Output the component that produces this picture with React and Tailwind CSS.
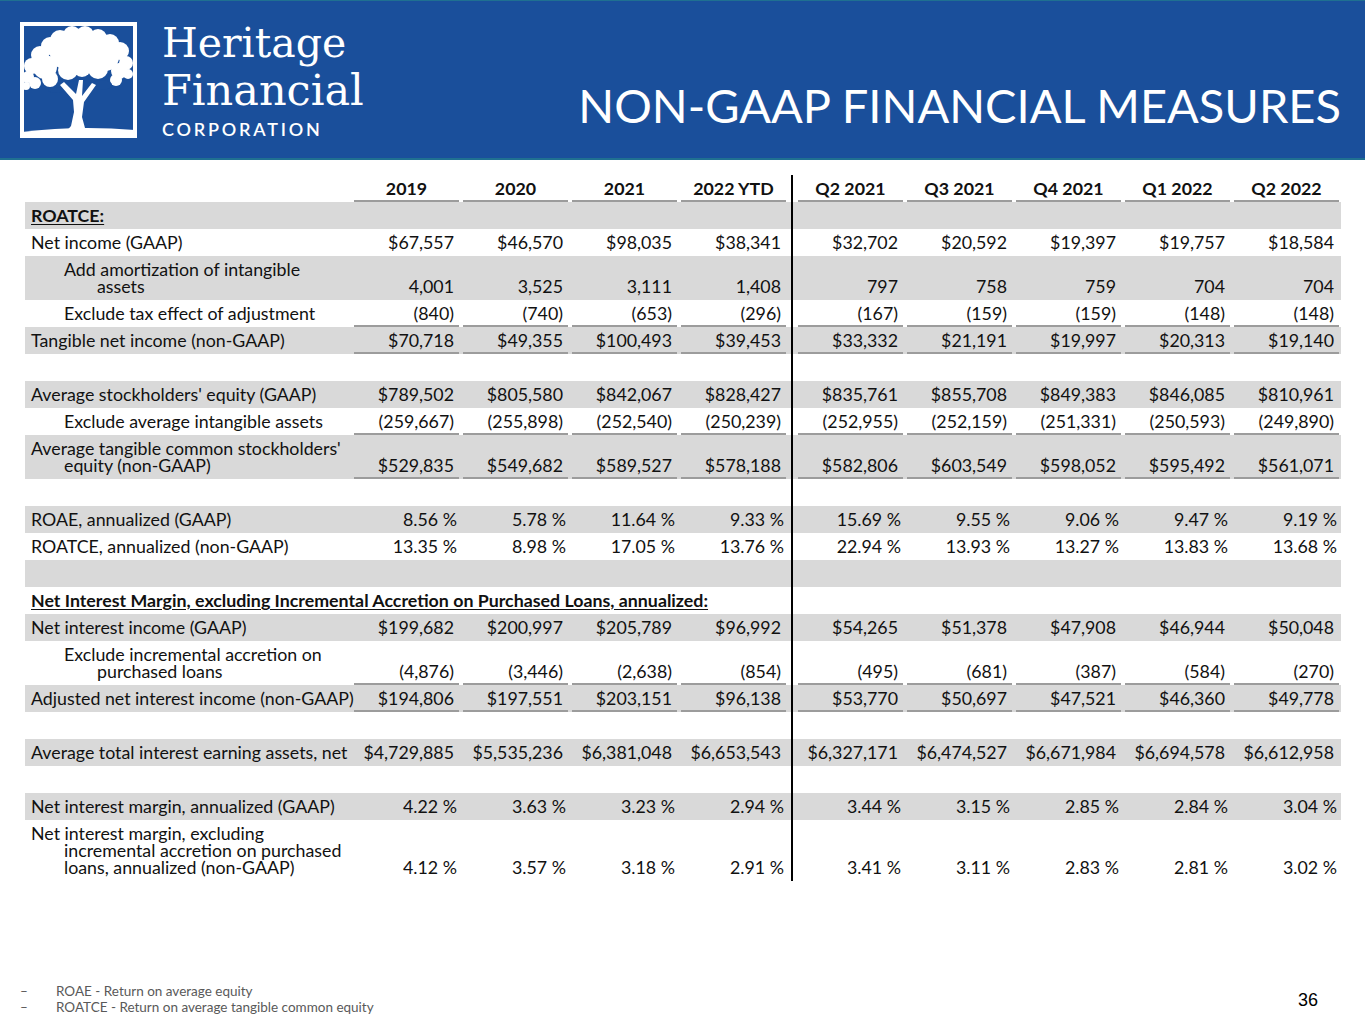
import React from 'react';

// rows of the non-GAAP table, in slide order
const G = 'bg-[#d9d9d9]';
const W = 'bg-white';

const rows = [
  { kind: 'section', label: 'ROATCE:', bg: G },
  { label: 'Net income (GAAP)', bg: W, vals: ['$67,557', '$46,570', '$98,035', '$38,341', '$32,702', '$20,592', '$19,397', '$19,757', '$18,584'] },
  { label: 'Add amortization of intangible\nassets', lines: 2, indent: true, bg: G, vals: ['4,001', '3,525', '3,111', '1,408', '797', '758', '759', '704', '704'] },
  { label: 'Exclude tax effect of adjustment', indent: true, bg: W, line: true, vals: ['(840)', '(740)', '(653)', '(296)', '(167)', '(159)', '(159)', '(148)', '(148)'] },
  { label: 'Tangible net income (non-GAAP)', bg: G, line: true, vals: ['$70,718', '$49,355', '$100,493', '$39,453', '$33,332', '$21,191', '$19,997', '$20,313', '$19,140'] },
  { kind: 'blank', bg: W },
  { label: "Average stockholders' equity (GAAP)", bg: G, vals: ['$789,502', '$805,580', '$842,067', '$828,427', '$835,761', '$855,708', '$849,383', '$846,085', '$810,961'] },
  { label: 'Exclude average intangible assets', indent: true, bg: W, line: true, vals: ['(259,667)', '(255,898)', '(252,540)', '(250,239)', '(252,955)', '(252,159)', '(251,331)', '(250,593)', '(249,890)'] },
  { label: "Average tangible common stockholders'\nequity (non-GAAP)", lines: 2, bg: G, line: true, vals: ['$529,835', '$549,682', '$589,527', '$578,188', '$582,806', '$603,549', '$598,052', '$595,492', '$561,071'] },
  { kind: 'blank', bg: W },
  { label: 'ROAE, annualized (GAAP)', bg: G, pct: true, vals: ['8.56 %', '5.78 %', '11.64 %', '9.33 %', '15.69 %', '9.55 %', '9.06 %', '9.47 %', '9.19 %'] },
  { label: 'ROATCE, annualized (non-GAAP)', bg: W, pct: true, vals: ['13.35 %', '8.98 %', '17.05 %', '13.76 %', '22.94 %', '13.93 %', '13.27 %', '13.83 %', '13.68 %'] },
  { kind: 'blank', bg: G },
  { kind: 'section', label: 'Net Interest Margin, excluding Incremental Accretion on Purchased Loans, annualized:', bg: W },
  { label: 'Net interest income (GAAP)', bg: G, vals: ['$199,682', '$200,997', '$205,789', '$96,992', '$54,265', '$51,378', '$47,908', '$46,944', '$50,048'] },
  { label: 'Exclude incremental accretion on\npurchased loans', lines: 2, indent: true, bg: W, line: true, vals: ['(4,876)', '(3,446)', '(2,638)', '(854)', '(495)', '(681)', '(387)', '(584)', '(270)'] },
  { label: 'Adjusted net interest income (non-GAAP)', bg: G, line: true, vals: ['$194,806', '$197,551', '$203,151', '$96,138', '$53,770', '$50,697', '$47,521', '$46,360', '$49,778'] },
  { kind: 'blank', bg: W },
  { label: 'Average total interest earning assets, net', bg: G, vals: ['$4,729,885', '$5,535,236', '$6,381,048', '$6,653,543', '$6,327,171', '$6,474,527', '$6,671,984', '$6,694,578', '$6,612,958'] },
  { kind: 'blank', bg: W },
  { label: 'Net interest margin, annualized (GAAP)', bg: G, pct: true, vals: ['4.22 %', '3.63 %', '3.23 %', '2.94 %', '3.44 %', '3.15 %', '2.85 %', '2.84 %', '3.04 %'] },
  { label: 'Net interest margin, excluding\nincremental accretion on purchased\nloans, annualized (non-GAAP)', lines: 3, bg: W, pct: true, vals: ['4.12 %', '3.57 %', '3.18 %', '2.91 %', '3.41 %', '3.11 %', '2.83 %', '2.81 %', '3.02 %'] },
];

const years = ['2019', '2020', '2021', '2022 YTD'];
const quarters = ['Q2 2021', 'Q3 2021', 'Q4 2021', 'Q1 2022', 'Q2 2022'];

const GRID = 'grid grid-cols-[327px_repeat(4,109px)_8px_repeat(5,109px)]';

function Divider() {
  return (
    <div className="flex justify-center">
      <div className="w-[2px] bg-black" />
    </div>
  );
}

function ValueCell({ v, line, pct }) {
  return (
    <div className={`mx-[2px] flex items-end justify-end whitespace-nowrap ${pct ? 'pr-[2px]' : 'pr-[5px]'} ${line ? 'border-b-2 border-[#9c9c9c] pb-[3px]' : 'pb-[5px]'}`}>
      {v}
    </div>
  );
}

function Row({ row }) {
  if (row.kind === 'blank') {
    return (
      <div className={`${GRID} h-[27px] ${row.bg}`}>
        <div className="col-span-5" />
        <Divider />
        <div className="col-span-5" />
      </div>
    );
  }
  if (row.kind === 'section') {
    return (
      <div className={`${GRID} h-[27px] ${row.bg}`}>
        <div className="col-span-5 flex items-end pb-[5px] pl-[6px] font-bold underline underline-offset-2 whitespace-nowrap">
          {row.label}
        </div>
        <Divider />
        <div className="col-span-5" />
      </div>
    );
  }
  const h = !row.lines ? 'h-[27px]' : row.lines === 2 ? 'h-[44px]' : 'h-[61px]';
  return (
    <div className={`${GRID} ${h} ${row.bg}`}>
      <div className="flex items-end pb-[5px] min-w-0">
        <div className={`whitespace-pre -indent-[33px] ${row.indent ? 'pl-[72px]' : 'pl-[39px]'}`}>{row.label}</div>
      </div>
      {row.vals.slice(0, 4).map((v, i) => (
        <ValueCell key={i} v={v} line={row.line} pct={row.pct} />
      ))}
      <Divider />
      {row.vals.slice(4).map((v, i) => (
        <ValueCell key={i} v={v} line={row.line} pct={row.pct} />
      ))}
    </div>
  );
}

function TreeLogo() {
  const leaves = [
    [40, 18, 10], [52, 13, 9], [65, 13, 9], [78, 16, 9], [90, 21, 9], [100, 29, 9], [106, 41, 7],
    [30, 24, 9], [20, 33, 9], [12, 44, 8], [8, 55, 6], [25, 45, 12], [45, 32, 15], [65, 30, 15],
    [85, 35, 14], [99, 49, 8], [78, 47, 10], [48, 48, 10], [30, 57, 8], [15, 61, 6], [96, 58, 6],
    [62, 46, 9], [108, 52, 5], [6, 64, 4],
  ];
  return (
    <svg width="117" height="116" viewBox="0 0 117 116">
      <rect x="2" y="2" width="113" height="112" fill="none" stroke="white" strokeWidth="4" />
      {leaves.map(([cx, cy, r], i) => (
        <circle key={i} cx={cx} cy={cy} r={r} fill="white" />
      ))}
      <ellipse cx="55" cy="64" rx="9" ry="5" fill="#1a4f9b" />
      <ellipse cx="82" cy="63" rx="10" ry="5" fill="#1a4f9b" />
      <ellipse cx="36" cy="68" rx="8" ry="3" fill="#1a4f9b" />
      <path
        d="M44 112 L51 104 L54 90 L53 78 L40 63 L44 60 L56 72 L59 58 L63 58 L62 74 L72 61 L76 63 L64 80 L62 95 L65 106 L74 112 Z"
        fill="white"
      />
      <path d="M2 114 L2 110 Q58 103 115 108 L115 114 Z" fill="white" />
    </svg>
  );
}

export default function App() {
  return (
    <div className="w-[1365px] h-[1024px] bg-white relative overflow-hidden">
      {/* title band */}
      <div className="h-[160px] bg-[#1a4f9b] border-t border-b-2 border-[#1f7091] flex items-start">
        <div className="ml-[20px] mt-[21px]">
          <TreeLogo />
        </div>
        <div className="ml-[25px] mt-[19px] text-white">
          <div className="font-['DejaVu_Serif',serif] text-[41px] leading-[47px]">Heritage</div>
          <div className="font-['DejaVu_Serif',serif] text-[43px] leading-[47px]">Financial</div>
          <div className="mt-[5px] font-['Lato',sans-serif] font-semibold text-[18px] leading-[20px] tracking-[2.8px]">CORPORATION</div>
        </div>
        <div className="ml-auto mr-[24px] mt-[76px] text-white font-['Lato',sans-serif] text-[47px] leading-[56px]">
          NON-GAAP FINANCIAL MEASURES
        </div>
      </div>

      {/* table */}
      <div className="ml-[25px] mt-[15px] w-[1316px] font-['Lato',sans-serif] text-[17.8px] leading-[17px] text-[#111]">
        <div className={`${GRID} h-[27px] font-bold`}>
          <div />
          {years.map((y) => (
            <div key={y} className="mx-[2px] flex items-end justify-center pb-[3px] border-b-2 border-[#9c9c9c]">{y}</div>
          ))}
          <Divider />
          {quarters.map((q) => (
            <div key={q} className="mx-[2px] flex items-end justify-center pb-[3px] border-b-2 border-[#9c9c9c]">{q}</div>
          ))}
        </div>
        {rows.map((r, i) => (
          <Row key={i} row={r} />
        ))}
      </div>

      {/* footnotes */}
      <div className="absolute left-[20px] top-[983px] font-['Lato',sans-serif] text-[13.5px] leading-[16px] text-[#595959]">
        <div className="flex"><span className="w-[36px]">–</span><span>ROAE - Return on average equity</span></div>
        <div className="flex"><span className="w-[36px]">–</span><span>ROATCE - Return on average tangible common equity</span></div>
      </div>
      <div className="absolute left-[1298px] top-[989px] font-['Liberation_Sans',sans-serif] text-[18px] leading-[22px] text-black">36</div>
    </div>
  );
}
